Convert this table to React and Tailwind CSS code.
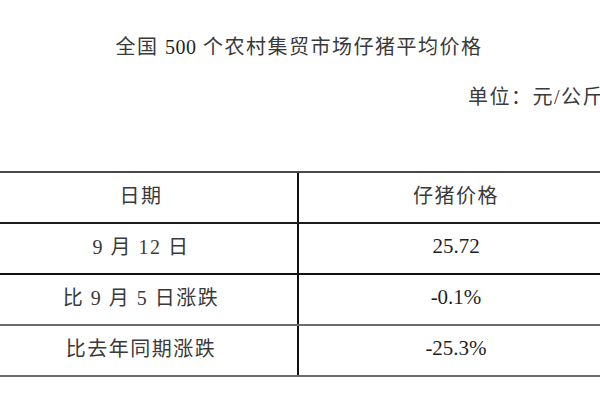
import React from "react";

const rows = [
  { a: "日期", b: "仔猪价格", num: false, border: "border-[#1a1a1a]" },
  { a: "9 月 12 日", b: "25.72", num: true, border: "border-[#111111]" },
  { a: "比 9 月 5 日涨跌", b: "-0.1%", num: true, border: "border-[#6b6b6b]" },
  { a: "比去年同期涨跌", b: "-25.3%", num: true, border: "border-[#6b6b6b]" },
];

export default function App() {
  return (
    <div className="w-[600px] h-[400px] bg-white overflow-hidden font-['Liberation_Serif','Noto_Sans_CJK_SC',serif]">
      <div className="ml-[-15px] w-[628px] text-[20px] tracking-[1.5px] text-[#3a3a3a]">
        <div className="pt-[35px] h-[60px] leading-[25px] text-center">
          全国 <span className="text-[#1f1f1f] tracking-[0.5px]">500</span> 个农村集贸市场仔猪平均价格
        </div>
        <div className="mt-[25px] h-[25px] leading-[25px] text-right pr-[9px]">
          单位：元/公斤
        </div>
        <div className="mt-[61px] border-t-2 border-[#4a4a4a]">
          {rows.map((r, i) => (
            <div key={i} className={`grid grid-cols-[314px_314px] h-[51px] border-b-2 ${r.border}`}>
              <div className="flex items-center justify-center border-r-2 border-[#111111] pb-[3px] whitespace-pre">
                {r.a}
              </div>
              <div
                className={
                  r.num
                    ? "flex items-center justify-center pb-[3px] text-[#1f1f1f] tracking-normal text-[21px]"
                    : "flex items-center justify-center pb-[3px]"
                }
              >
                {r.b}
              </div>
            </div>
          ))}
        </div>
      </div>
    </div>
  );
}
